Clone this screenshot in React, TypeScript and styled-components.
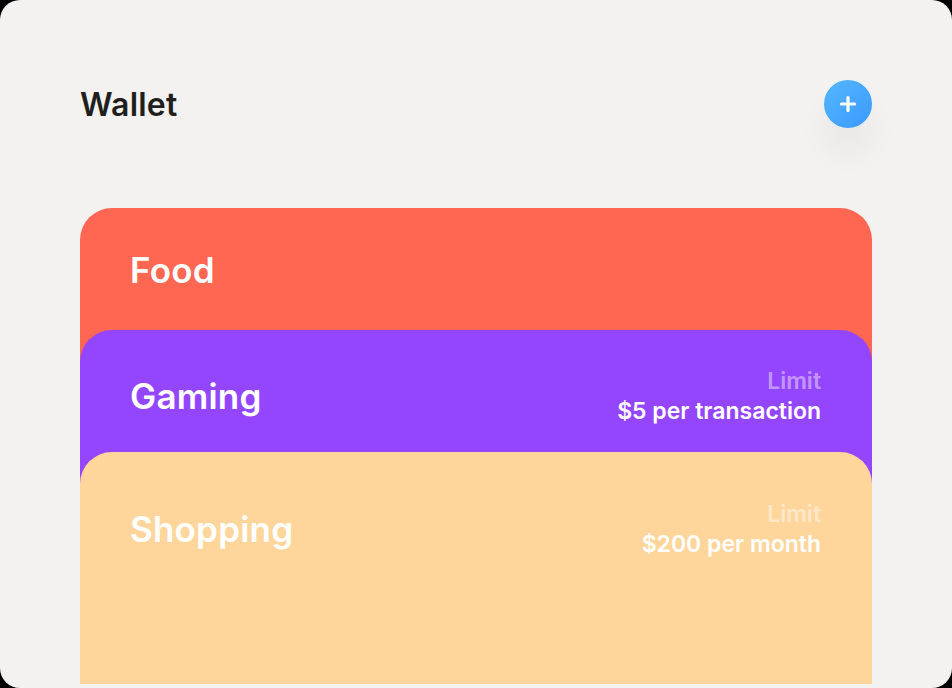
import React from "react";
import styled, { createGlobalStyle } from "styled-components";

const Global = createGlobalStyle`
  html, body { margin: 0; padding: 0; background: #000; }
  body { font-family: "Inter", "Lato", sans-serif; }
  * { box-sizing: border-box; }
`;

const Panel = styled.div`
  width: 952px;
  height: 688px;
  border-radius: 20px;
  background: #f3f2f0;
  padding: 80px 80px 0 80px;
  display: flex;
  flex-direction: column;
  overflow: hidden;
`;

const Header = styled.header`
  display: flex;
  align-items: center;
  justify-content: space-between;
  height: 48px;
`;

const Title = styled.h1`
  margin: 0;
  font-size: 32px;
  font-weight: 600;
  color: #1f1f1c;
  letter-spacing: 0.2px;
`;

const AddButton = styled.button`
  width: 48px;
  height: 48px;
  border-radius: 50%;
  border: none;
  padding: 0;
  display: flex;
  align-items: center;
  justify-content: center;
  background: linear-gradient(135deg, #55b8ff 0%, #3b98ff 100%);
  box-shadow: 0 26px 30px rgba(40, 40, 80, 0.05);
  cursor: pointer;
`;

const Stack = styled.div`
  margin-top: 80px;
  height: 476px;
  overflow: hidden;
  display: flex;
  flex-direction: column;
`;

const Card = styled.section<{ $bg: string; $pt: number }>`
  flex: none;
  height: 300px;
  margin-bottom: -178px;
  border-radius: 32px;
  background: ${(p) => p.$bg};
  padding: ${(p) => p.$pt}px 51px 0 50px;
  &:last-child { margin-bottom: 0; }
`;

const Row = styled.div`
  display: flex;
  align-items: center;
  justify-content: space-between;
`;

const CardName = styled.h2`
  margin: 0;
  font-size: 35px;
  line-height: 44px;
  font-weight: 600;
  color: #fff;
  letter-spacing: 0.2px;
`;

const LimitBox = styled.div`
  display: flex;
  flex-direction: column;
  align-items: flex-end;
  text-align: right;
`;

const LimitLabel = styled.span`
  font-size: 23px;
  line-height: 30px;
  font-weight: 600;
  color: rgba(255, 255, 255, 0.45);
`;

const LimitValue = styled.span`
  font-size: 23px;
  line-height: 30px;
  font-weight: 600;
  color: #fff;
`;

const cards = [
  { name: "Food", bg: "#ff6753", pt: 40, limit: null },
  { name: "Gaming", bg: "#9446ff", pt: 36, limit: "$5 per transaction" },
  { name: "Shopping", bg: "#fed69c", pt: 47, limit: "$200 per month" },
];

export default function App() {
  return (
    <>
      <Global />
      <Panel>
        <Header>
          <Title>Wallet</Title>
          <AddButton aria-label="Add">
            <svg width="18" height="18" viewBox="0 0 18 18">
              <path d="M9 2.5v13M2.5 9h13" stroke="#fff" strokeWidth="3.2" strokeLinecap="round" />
            </svg>
          </AddButton>
        </Header>
        <Stack>
          {cards.map((c) => (
            <Card key={c.name} $bg={c.bg} $pt={c.pt}>
              <Row>
                <CardName>{c.name}</CardName>
                {c.limit && (
                  <LimitBox>
                    <LimitLabel>Limit</LimitLabel>
                    <LimitValue>{c.limit}</LimitValue>
                  </LimitBox>
                )}
              </Row>
            </Card>
          ))}
        </Stack>
      </Panel>
    </>
  );
}
